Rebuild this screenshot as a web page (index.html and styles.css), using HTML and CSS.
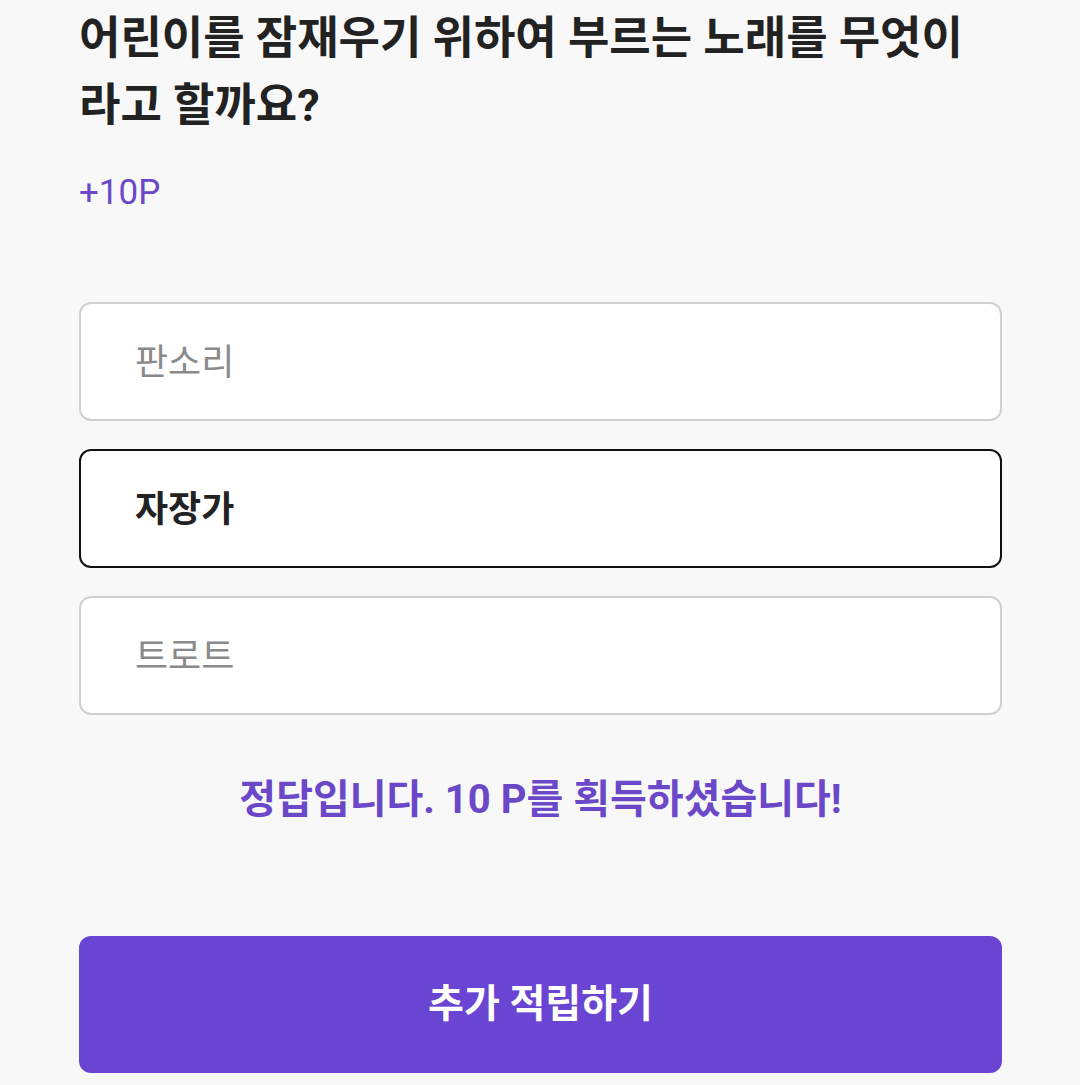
FILE: index.html
```html
<!DOCTYPE html>
<html lang="ko">
<head>
  <meta charset="UTF-8" />
  <meta name="viewport" content="width=device-width, initial-scale=1.0"/>
  <title>퀴즈</title>
  <link rel="stylesheet" href="styles.css">
</head>
<body>
  <div class="quiz">
    <h2 class="question">어린이를 잠재우기 위하여 부르는 노래를 무엇이<br>라고 할까요?</h2>
    <div class="point">+10P</div>

    <ul class="options">
      <li class="option">판소리</li>
      <li class="option selected">자장가</li>
      <li class="option">트로트</li>
    </ul>

    <p class="result">정답입니다. 10 P를 획득하셨습니다!</p>

    <button class="more-btn">추가 적립하기</button>
  </div>
</body>
</html>
```

FILE: styles.css
```css
body {
  font-family: Roboto, "Noto Sans CJK KR", sans-serif;
  background-color: #f8f8f8;
  margin: 0;
  color: #222;
}

.quiz {
  padding: 5px 78px 0 79px;
  display: flex;
  flex-direction: column;
}

.question {
  margin: 0;
  font-size: 45px;
  line-height: 67px;
  font-weight: bold;
  color: #222;
}

.point {
  margin-top: 34px;
  font-size: 35px;
  line-height: 40px;
  color: #6b48c8;
}

.options {
  list-style: none;
  margin: 89px 0 0;
  padding: 0;
  display: flex;
  flex-direction: column;
  gap: 28px;
}

.option {
  height: 119px;
  box-sizing: border-box;
  border: 2px solid #d0d0d0;
  border-radius: 12px;
  background-color: #fff;
  padding: 0 0 6px 54px;
  display: flex;
  align-items: center;
  font-size: 36px;
  color: #8a8a8a;
}

.option.selected {
  border-color: #111;
  color: #222;
  font-weight: bold;
}

.result {
  margin: 63px 0 0;
  text-align: center;
  font-size: 40px;
  line-height: 44px;
  font-weight: bold;
  color: #6b48c8;
}

.more-btn {
  margin-top: 114px;
  height: 137px;
  padding: 0 0 10px;
  border: none;
  border-radius: 12px;
  background-color: #6a44d2;
  color: #fff;
  font-family: inherit;
  font-size: 39px;
  font-weight: bold;
  cursor: pointer;
}
```
